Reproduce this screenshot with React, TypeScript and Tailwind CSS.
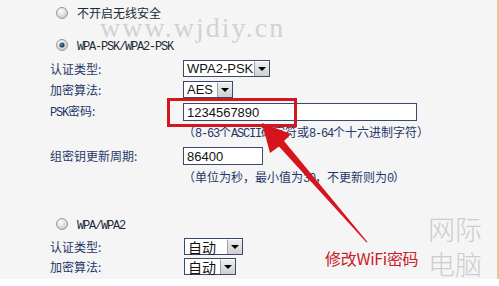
import React from "react";

function Radio({ checked }: { checked?: boolean }) {
  return (
    <svg width="12" height="12" viewBox="0 0 12 12" className="shrink-0">
      <defs>
        <radialGradient id={checked ? "rg1" : "rg0"} cx="40%" cy="35%" r="70%">
          <stop offset="0%" stopColor="#ffffff" />
          <stop offset="100%" stopColor="#c4c4c4" />
        </radialGradient>
      </defs>
      <circle cx="6" cy="6" r="5.5" fill={`url(#${checked ? "rg1" : "rg0"})`} stroke="#9a9a9a" strokeWidth="1" />
      {checked && <circle cx="6" cy="6" r="2.6" fill="#2b4d7c" />}
      {checked && <circle cx="5.3" cy="5.3" r="0.9" fill="#7f9cc4" />}
    </svg>
  );
}

function M({ children }: { children: React.ReactNode }) {
  return (
    <span className="font-['Liberation_Mono',monospace] text-[12px] tracking-[-1.2px]">{children}</span>
  );
}

function Select({ w, text, cjk }: { w: string; text: string; cjk?: boolean }) {
  return (
    <div className={`${w} h-[17px] flex border border-[#3a4a6c] bg-white`}>
      <div
        className={`flex-1 flex items-center pl-[3px] text-[#111] ${
          cjk ? "text-[14px] font-['Noto_Sans_CJK_SC',sans-serif]" : "text-[13px] font-['Liberation_Sans',sans-serif]"
        } leading-none`}
      >
        {text}
      </div>
      <div className="w-[15px] h-full flex items-center justify-center bg-gradient-to-b from-[#eeeeee] to-[#cfcfcf] border-l border-[#9aa0ad] border-t border-t-white">
        <div className="w-0 h-0 border-l-[4px] border-r-[4px] border-t-[4px] border-l-transparent border-r-transparent border-t-black" />
      </div>
    </div>
  );
}

function Input({ w, text }: { w: string; text: string }) {
  return (
    <div className={`${w} h-[18px] flex items-center border border-[#3a4a6c] bg-white pl-[3px] text-[13px] leading-none text-[#111] font-['Liberation_Sans',sans-serif]`}>
      {text}
    </div>
  );
}

function Label({ children }: { children: React.ReactNode }) {
  return <div className="w-[133px] shrink-0 text-[12px] leading-[16px]">{children}</div>;
}

export default function App() {
  return (
    <div className="relative w-[499px] h-[286px] bg-white overflow-hidden font-['Noto_Sans_CJK_SC',sans-serif] text-[#1f3868]">
      <div className="h-[279px] bg-[#f5f5f5] border-r-2 border-[#e9c497] flex flex-col">
        <div className="mt-[3px] h-[20px] flex items-center pl-[56px]">
          <Radio />
          <span className="ml-[9px] text-[12px] leading-[16px] text-[#222a3a]">不开启无线安全</span>
        </div>
        <div className="mt-[12px] h-[20px] flex items-center pl-[56px]">
          <Radio checked />
          <span className="ml-[9px] leading-[16px] text-[#222a3a]">
            <M>WPA-PSK/WPA2-PSK</M>
          </span>
        </div>
        <div className="mt-[5px] h-[17px] flex items-center pl-[50px]">
          <Label>认证类型:</Label>
          <Select w="w-[87px]" text="WPA2-PSK" />
        </div>
        <div className="mt-[4px] h-[17px] flex items-center pl-[50px]">
          <Label>加密算法:</Label>
          <Select w="w-[50px]" text="AES" />
        </div>
        <div className="mt-[5px] h-[18px] flex items-center pl-[50px]">
          <Label>
            <M>PSK</M>密码:
          </Label>
          <Input w="w-[234px]" text="1234567890" />
        </div>
        <div className="mt-[3px] h-[18px] flex items-center pl-[183px] text-[12px] leading-[16px]">
          <span>
            （<M>8-63</M>个<M>ASCII</M>码字符或<M>8-64</M>个十六进制字符）
          </span>
        </div>
        <div className="mt-[5px] h-[18px] flex items-center pl-[50px]">
          <Label>组密钥更新周期:</Label>
          <Input w="w-[80px]" text="86400" />
        </div>
        <div className="mt-[4px] h-[18px] flex items-center pl-[183px] text-[12px] leading-[16px]">
          <span>
            （单位为秒，最小值为<M>30</M>，不更新则为<M>0</M>）
          </span>
        </div>
        <div className="mt-[27px] h-[20px] flex items-center pl-[56px]">
          <Radio />
          <span className="ml-[9px] leading-[16px] text-[#222a3a]">
            <M>WPA/WPA2</M>
          </span>
        </div>
        <div className="mt-[4px] h-[17px] flex items-center pl-[50px]">
          <Label>认证类型:</Label>
          <div className="ml-[1px]">
            <Select w="w-[59px]" text="自动" cjk />
          </div>
        </div>
        <div className="mt-[3px] h-[17px] flex items-center pl-[50px]">
          <Label>加密算法:</Label>
          <div className="ml-[1px]">
            <Select w="w-[52px]" text="自动" cjk />
          </div>
        </div>
      </div>

      <div className="absolute left-[100px] top-[14px] text-[28px] leading-[28px] tracking-[2px] text-[#d2d2d2] font-['Liberation_Serif',serif] pointer-events-none">
        www.wjdiy.cn
      </div>

      <div className="absolute left-[428px] top-[211px] text-[27px] leading-[35px] text-[#cdcdcd] font-light pointer-events-none">
        <div>网际</div>
        <div>电脑</div>
      </div>

      <div className="absolute left-[167px] top-[98px] w-[130px] h-[29px] border-[3px] border-[#d3171f]" />

      <svg className="absolute left-0 top-0 pointer-events-none" width="499" height="286" viewBox="0 0 499 286">
        <polygon
          points="262,123 291,134 284,141 367.5,242 366.5,242.5 279,146.5 270,153"
          fill="#d7141c"
        />
      </svg>

      <div className="absolute left-[325px] top-[249px] text-[16px] leading-[18px] text-[#c8202a] tracking-[-0.3px]">
        修改WiFi密码
      </div>
    </div>
  );
}
